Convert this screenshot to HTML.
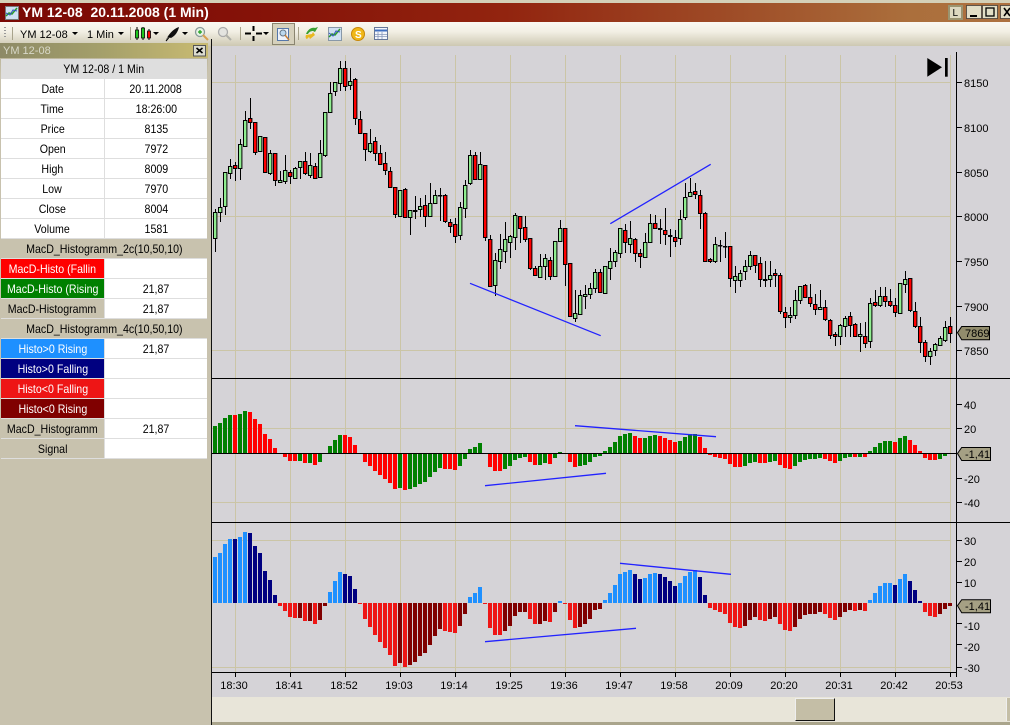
<!DOCTYPE html>
<html><head><meta charset="utf-8"><style>
html,body{margin:0;padding:0;width:1010px;height:725px;overflow:hidden;background:#c8c2ae;font-family:"Liberation Sans",sans-serif;font-size:11px;color:#000}
.a{position:absolute}
#grid{position:absolute;left:1px;top:59px;width:206px;display:grid;grid-template-columns:103px 102px;grid-auto-rows:19px;gap:1px;background:#dedede;padding-bottom:1px;font-size:12px}
#grid div{background:#fff;text-align:center;line-height:20px;height:19px;overflow:hidden;white-space:nowrap}
#grid i{display:inline-block;font-style:normal;transform:scaleX(.885)}
#grid .h{grid-column:1/3;background:#c8c2ae}
#grid .t{background:#c8c2ae}
#grid .w{color:#fff}
svg text{font-family:"Liberation Sans",sans-serif;font-size:11px;fill:#000}
</style></head><body>
<div class="a" style="left:0;top:0;width:1010px;height:3px;background:#d4d0b8"></div>
<div class="a" style="left:0;top:3px;width:1010px;height:19px;background:linear-gradient(90deg,#7a0905 0,#851208 25%,#92240f 50%,#a0512a 75%,#ab6f3c 90%,#ad7140 100%)"></div>
<div class="a" style="left:22px;top:4px;color:#fff;font-weight:bold;font-size:14px;line-height:17px;white-space:pre">YM 12-08  20.11.2008 (1 Min)</div>
<div class="a" style="left:0;top:22px;width:1010px;height:24px;background:linear-gradient(#faf8f2,#f2efe4 40%,#cdc8b2)"></div>
<div class="a" style="left:212px;top:46px;width:798px;height:651px;background:#d5d3d7"></div>
<div class="a" style="left:212px;top:697px;width:798px;height:26px;background:#e8e5d9"></div>
<div class="a" style="left:212px;top:722px;width:798px;height:3px;background:#aaa58c"></div>
<div class="a" style="left:795px;top:698px;width:40px;height:23px;background:#c4bea6;box-sizing:border-box;border:1px solid;border-color:#eee #111 #111 #eee"></div>
<div class="a" style="left:1006px;top:698px;width:4px;height:23px;background:#c4bea6;border-left:1px solid #eee;box-sizing:border-box"></div>
<div class="a" style="left:0;top:43px;width:208px;height:15px;background:linear-gradient(90deg,#8d8a66,#a5a06a 50%,#c9bb72)"></div>
<div class="a" style="left:3px;top:44px;color:#d8d8c8;line-height:14px">YM 12-08</div>
<div class="a" style="left:0;top:58px;width:208px;height:21px;background:linear-gradient(#bdb79d,#cbc5b0)"></div>
<div id="grid">
<div class="h" style="background:transparent"><i>YM 12-08 / 1 Min</i></div>
<div><i>Date</i></div><div><i>20.11.2008</i></div>
<div><i>Time</i></div><div><i>18:26:00</i></div>
<div><i>Price</i></div><div><i>8135</i></div>
<div><i>Open</i></div><div><i>7972</i></div>
<div><i>High</i></div><div><i>8009</i></div>
<div><i>Low</i></div><div><i>7970</i></div>
<div><i>Close</i></div><div><i>8004</i></div>
<div><i>Volume</i></div><div><i>1581</i></div>
<div class="h"><i>MacD_Histogramm_2c(10,50,10)</i></div>
<div class="w" style="background:#f00"><i>MacD-Histo (Fallin</i></div><div></div>
<div class="w" style="background:#008000"><i>MacD-Histo (Rising</i></div><div><i>21,87</i></div>
<div class="t"><i>MacD-Histogramm</i></div><div><i>21,87</i></div>
<div class="h"><i>MacD_Histogramm_4c(10,50,10)</i></div>
<div class="w" style="background:#1e90ff"><i>Histo&gt;0 Rising</i></div><div><i>21,87</i></div>
<div class="w" style="background:#000080"><i>Histo&gt;0 Falling</i></div><div></div>
<div class="w" style="background:#ee1515"><i>Histo&lt;0 Falling</i></div><div></div>
<div class="w" style="background:#800000"><i>Histo&lt;0 Rising</i></div><div></div>
<div class="t"><i>MacD_Histogramm</i></div><div><i>21,87</i></div>
<div class="t"><i>Signal</i></div><div></div>
</div>
<svg class="a" style="left:0;top:0" width="1010" height="725" viewBox="0 0 1010 725">
<!-- title icon -->
<rect x="5.5" y="6.5" width="13" height="13" fill="#cfe0f2" stroke="#777"/>
<path d="M6 16l3-3 3 1 5-6" fill="none" stroke="#2a9a2a" stroke-width="1.5"/><path d="M6 13l4 2 3-5 4 1" fill="none" stroke="#3355bb"/>
<!-- panel close -->
<rect x="193.5" y="45.5" width="12" height="10.5" fill="#dcdcd0" stroke="#555"/>
<path d="M196.5 48l6 5M202.5 48l-6 5" stroke="#000" stroke-width="1.6"/>
<!-- dark divider -->
<rect x="211" y="39" width="1" height="686" fill="#111"/>
<!-- toolbar -->
<path d="M5 27v1M5 30v1M5 33v1M5 36v1" stroke="#999" stroke-width="2"/>
<path d="M12.5 27V40M130.5 27V40M240.5 27V40M298.5 27V40" stroke="#a8a38c"/>
<text x="20" y="38">YM 12-08</text><text x="87" y="38">1 Min</text>
<path d="M72 32h6l-3 3zM118 32h6l-3 3zM153 32h6l-3 3zM182 32h6l-3 3zM263 32h6l-3 3z" fill="#000"/>
<path d="M137 27v13M143 27v13M149 29v11" stroke="#000"/>
<path d="M135.5 30h3v8h-3zM141.500 28h3v10h-3z" fill="#1ec81e" stroke="#000" stroke-width=".8"/><path d="M147.500 31h3v7h-3z" fill="#f00" stroke="#000" stroke-width=".8"/>
<path d="M166 40c2-5 7-11 13-13-1 5-4 9-8 11l-3-1z" fill="#111"/><path d="M166 41l5-6" stroke="#000"/>
<circle cx="200" cy="32" r="4.500" fill="#e8f2e4" stroke="#8a9a9a" stroke-width="1.300"/><path d="M203 35l5 5" stroke="#d8a050" stroke-width="2"/><path d="M198 32h4M200 30v4" stroke="#18a018" stroke-width="1.200"/>
<circle cx="223" cy="32" r="4.500" fill="#e4e4e0" stroke="#aaa" stroke-width="1.300"/><path d="M226 35l5 5" stroke="#b0b0a8" stroke-width="2"/>
<path d="M245 33.500h6M256 33.500h6M253.500 26v5M253.500 36v5" stroke="#000" stroke-width="2"/>
<rect x="272.500" y="23.500" width="22" height="21" fill="#d6d1bc" stroke="#8a8570"/>
<rect x="277.500" y="28.500" width="11" height="12" fill="#eef2fa" stroke="#5577aa"/><circle cx="283" cy="33" r="3" fill="#bcd8ee" stroke="#667788"/><path d="M285 35l4 5" stroke="#c8803a" stroke-width="1.500"/>
<path d="M306 34c2-5 6-7 9-6l3-1-3 5-2-1c-2 0-4 1-5 3z" fill="#3aa032"/><path d="M306 35l6-1 1-2 2 3-5 4-1-2-2 2c-1 0-2-2-1-4z" fill="#e8b820"/>
<rect x="328.500" y="27.500" width="13" height="13" fill="#cfe0f2" stroke="#8898a8"/><path d="M329 37l3-3 3 1 5-6" fill="none" stroke="#2a9a2a" stroke-width="1.500"/><path d="M329 33l4 3 3-5 4 1" fill="none" stroke="#3355bb"/>
<circle cx="358" cy="34" r="6.500" fill="#f0b818" stroke="#c88808"/><text x="355" y="38" style="font-size:10px;font-weight:bold;fill:#fff">S</text>
<rect x="374.500" y="27.500" width="13" height="12" fill="#f4f6fb" stroke="#667799"/><path d="M375 30.500h12" stroke="#3f6fc0" stroke-width="2"/><path d="M378 32v7M382 32v7M375 34.500h12M375 36.500h12" stroke="#8899bb" stroke-width=".8"/>
<!-- window buttons -->
<rect x="949" y="6" width="13" height="13" fill="#dcd8c0" stroke="#9a9470" stroke-width="2"/><text x="952.500" y="16" style="font-size:10px">L</text>
<rect x="966.500" y="5.500" width="15" height="13" fill="#e2dec6" stroke="#333" stroke-width=".7"/><path d="M970 16h7" stroke="#000" stroke-width="2"/>
<rect x="982.500" y="5.500" width="15" height="13" fill="#e2dec6" stroke="#333" stroke-width=".7"/><rect x="986" y="8" width="8" height="8" fill="none" stroke="#000" stroke-width="1.300"/>
<rect x="1000.500" y="5.500" width="12" height="13" fill="#e2dec6" stroke="#333" stroke-width=".7"/><path d="M1004 8l6 8M1010 8l-6 8" stroke="#000" stroke-width="1.600"/>
<!-- grid -->
<path d="M235.500 55V672M290.500 55V672M345.500 55V672M400.500 55V672M455.500 55V672M510.500 55V672M565.500 55V672M620.500 55V672M675.500 55V672M730.500 55V672M785.500 55V672M840.500 55V672M895.500 55V672M950.500 55V672M212 82.500H951M212 216.500H951M212 350.500H951M212 428.500H951M212 502.500H951M212 540.500H951M212 667.500H951" stroke="#cbc5a6" fill="none"/>
<!-- pane lines -->
<path d="M212 378.500H1010M212 522.500H1010M212 672.500H957M956.500 52V677" stroke="#000" fill="none"/>
<path d="M212 453.500H957" stroke="#000" fill="none" stroke-width="1"/>
<!-- candle wicks -->
<g transform="translate(.5 0)" stroke="#000" stroke-width="1">
<path fill="none" d="M215 209V252M220 198V222M225 172V215M230 159V179M235 162V181M240 139V180M245 111V147M250 98V129M255 122V155M260 136V151M265 137V173M270 150V175M275 153V186M280 171V183M285 155V184M290 170V184M295 167V179M300 161V179M305 152V175M310 153V178M315 163V179M320 140V178M325 112V157M330 82V112M335 82V96M340 61V91M345 61V91M350 68V90M355 78V125M360 111V133M365 133V161M370 129V153M375 137V161M380 145V165M385 152V175M390 167V187M395 187V218M400 190V216M405 188V218M410 210V235M415 196V219M420 198V217M425 195V227M430 183V217M435 190V204M440 188V221M445 194V223M450 219V233M455 218V243M460 202V240M465 180V218M470 150V185M475 152V180M480 152V180M485 165V241M490 235V286M495 253V296M500 234V269M505 222V263M510 235V258M515 213V250M520 216V243M525 216V242M530 238V270M535 266V276M540 254V278M545 254V280M550 257V280M555 241V277M560 220V242M565 228V286M570 263V317M575 290V322M580 290V315M585 285V309M590 283V299M595 269V293M600 269V293M605 266V294M610 248V280M615 250V267M620 228V258M625 224V253M630 221V253M635 238V262M640 249V268M645 233V258M650 214V243M655 215V229M660 219V244M665 208V245M670 229V257M675 230V247M680 210V245M685 183V220M690 178V197M695 183V199M700 190V229M705 212V262M710 258V263M715 237V263M720 240V262M725 232V258M730 246V287M735 266V293M740 270V287M745 260V280M750 251V270M755 255V273M760 257V287M765 261V287M770 261V287M775 269V287M780 273V314M785 307V328M790 307V323M795 290V319M800 286V304M805 284V298M810 284V307M815 294V315M820 290V310M825 300V321M830 319V339M835 332V346M840 324V345M845 316V337M850 312V337M855 323V337M860 323V352M865 322V348M870 298V348M875 290V307M880 287V307M885 287V307M890 289V307M895 298V317M900 283V314M905 271V293M910 278V312M915 302V328M920 317V353M925 340V362M930 348V365M935 343V356M940 336V346M945 321V342M950 317V343"/>
</g>
<!-- candle bodies -->
<g transform="translate(.2 .5)" stroke="#000" stroke-width="1">
<path fill="#90ee90" d="M213.300 212h3.400V238h-3.400zM218.300 207h3.400V212h-3.400zM223.300 172h3.400V206h-3.400zM228.300 166h3.400V173h-3.400zM238.300 144h3.400V168h-3.400zM243.300 120h3.400V146h-3.400zM258.300 136h3.400V151h-3.400zM268.300 153h3.400V173h-3.400zM278.300 180h3.400V182h-3.400zM283.300 170h3.400V181h-3.400zM293.300 168h3.400V178h-3.400zM298.300 161h3.400V167h-3.400zM308.300 165h3.400V175h-3.400zM318.300 153h3.400V177h-3.400zM323.300 112h3.400V155h-3.400zM328.300 93h3.400V112h-3.400zM333.300 82h3.400V91h-3.400zM338.300 68h3.400V83h-3.400zM348.300 81h3.400V85h-3.400zM368.300 143h3.400V151h-3.400zM398.300 190h3.400V216h-3.400zM408.300 210h3.400V217h-3.400zM413.300 210h3.400V211h-3.400zM418.300 206h3.400V209h-3.400zM428.300 203h3.400V216h-3.400zM433.300 195h3.400V203h-3.400zM438.300 195h3.400V195.500h-3.400zM458.300 207h3.400V235h-3.400zM463.300 185h3.400V208h-3.400zM468.300 155h3.400V183h-3.400zM478.300 164h3.400V179h-3.400zM493.300 260h3.400V285h-3.400zM498.300 249h3.400V261h-3.400zM503.300 239h3.400V251h-3.400zM508.300 236h3.400V242h-3.400zM513.300 215h3.400V237h-3.400zM538.300 266h3.400V277h-3.400zM543.300 258h3.400V266h-3.400zM553.300 241h3.400V276h-3.400zM558.300 228h3.400V241h-3.400zM573.300 313h3.400V318h-3.400zM578.300 295h3.400V314h-3.400zM583.300 294h3.400V296h-3.400zM588.300 288h3.400V294h-3.400zM593.300 272h3.400V288h-3.400zM603.300 266h3.400V293h-3.400zM608.300 261h3.400V268h-3.400zM613.300 252h3.400V261h-3.400zM618.300 228h3.400V253h-3.400zM628.300 238h3.400V244h-3.400zM643.300 242h3.400V257h-3.400zM648.300 223h3.400V242h-3.400zM658.300 228h3.400V229h-3.400zM668.300 235h3.400V236h-3.400zM678.300 219h3.400V238h-3.400zM683.300 197h3.400V217h-3.400zM688.300 192h3.400V196h-3.400zM713.300 244h3.400V261h-3.400zM718.300 245h3.400V245.500h-3.400zM723.300 246h3.400V246.500h-3.400zM733.300 276h3.400V280h-3.400zM738.300 273h3.400V280h-3.400zM743.300 266h3.400V271h-3.400zM748.300 255h3.400V266h-3.400zM763.300 279h3.400V280h-3.400zM768.300 275h3.400V279h-3.400zM788.300 315h3.400V317h-3.400zM793.300 300h3.400V315h-3.400zM798.300 286h3.400V300h-3.400zM818.300 307h3.400V309h-3.400zM838.300 325h3.400V336h-3.400zM843.300 318h3.400V326h-3.400zM858.300 334h3.400V336h-3.400zM868.300 303h3.400V341h-3.400zM878.300 296h3.400V305h-3.400zM898.300 283h3.400V313h-3.400zM903.300 279h3.400V284h-3.400zM928.300 351h3.400V356h-3.400zM933.300 344h3.400V350h-3.400zM938.300 338h3.400V345h-3.400zM943.300 327h3.400V340h-3.400z"/>
<path fill="#f00" d="M233.300 165h3.400V168h-3.400zM248.300 118h3.400V122h-3.400zM253.300 122h3.400V152h-3.400zM263.300 137h3.400V172h-3.400zM273.300 153h3.400V180h-3.400zM288.300 172h3.400V176h-3.400zM303.300 161h3.400V173h-3.400zM313.300 166h3.400V178h-3.400zM343.300 68h3.400V86h-3.400zM353.300 79h3.400V118h-3.400zM358.300 119h3.400V133h-3.400zM363.300 133h3.400V149h-3.400zM373.300 141h3.400V153h-3.400zM378.300 153h3.400V164h-3.400zM383.300 163h3.400V170h-3.400zM388.300 171h3.400V187h-3.400zM393.300 187h3.400V214h-3.400zM403.300 189h3.400V217h-3.400zM423.300 205h3.400V216h-3.400zM443.300 195h3.400V221h-3.400zM448.300 222h3.400V226h-3.400zM453.300 224h3.400V236h-3.400zM473.300 155h3.400V179h-3.400zM483.300 165h3.400V237h-3.400zM488.300 239h3.400V286h-3.400zM518.300 216h3.400V228h-3.400zM523.300 227h3.400V239h-3.400zM528.300 238h3.400V268h-3.400zM533.300 268h3.400V275h-3.400zM548.300 260h3.400V276h-3.400zM563.300 228h3.400V264h-3.400zM568.300 263h3.400V316h-3.400zM598.300 272h3.400V292h-3.400zM623.300 230h3.400V242h-3.400zM633.300 239h3.400V253h-3.400zM638.300 253h3.400V256h-3.400zM653.300 223h3.400V228h-3.400zM663.300 230h3.400V234h-3.400zM673.300 237h3.400V241h-3.400zM693.300 191h3.400V194h-3.400zM698.300 195h3.400V213h-3.400zM703.300 213h3.400V261h-3.400zM708.300 259h3.400V261h-3.400zM728.300 246h3.400V278h-3.400zM753.300 255h3.400V265h-3.400zM758.300 263h3.400V279h-3.400zM773.300 273h3.400V275h-3.400zM778.300 275h3.400V311h-3.400zM783.300 312h3.400V317h-3.400zM803.300 285h3.400V297h-3.400zM808.300 297h3.400V303h-3.400zM813.300 304h3.400V309h-3.400zM823.300 307h3.400V319h-3.400zM828.300 320h3.400V335h-3.400zM833.300 334h3.400V336h-3.400zM848.300 316h3.400V325h-3.400zM853.300 324h3.400V336h-3.400zM863.300 336h3.400V343h-3.400zM873.300 302h3.400V305h-3.400zM883.300 296h3.400V301h-3.400zM888.300 301h3.400V305h-3.400zM893.300 305h3.400V312h-3.400zM908.300 278h3.400V310h-3.400zM913.300 311h3.400V326h-3.400zM918.300 326h3.400V342h-3.400zM923.300 342h3.400V356h-3.400zM948.300 326h3.400V333h-3.400z"/>
</g>
<!-- hist 1 -->
<g transform="translate(0 375) scale(1 .33333)" stroke-width="4" fill="none">
<path stroke="#008000" d="M215 153V235M220 144V235M225 129V235M230 120V235M240 117V235M245 108V235M300 258V235M310 264V235M320 261V235M330 213V235M335 195V235M340 180V235M400 339V235M410 342V235M415 336V235M420 327V235M425 321V235M430 306V235M435 291V235M440 279V235M460 273V235M465 252V235M470 222V235M475 216V235M480 204V235M505 282V235M510 273V235M515 255V235M520 249V235M525 246V235M540 270V235M545 264V235M555 249V235M560 231V235M580 273V235M585 270V235M590 261V235M595 246V235M600 243V235M605 228V235M610 216V235M615 201V235M620 183V235M625 177V235M630 174V235M645 189V235M650 183V235M655 180V235M680 198V235M685 186V235M690 177V235M695 177V235M745 273V235M750 264V235M755 261V235M770 261V235M775 258V235M795 273V235M800 261V235M805 255V235M810 252V235M815 252V235M820 249V235M840 258V235M845 249V235M850 246V235M860 246V235M870 228V235M875 216V235M880 204V235M885 198V235M890 198V235M900 189V235M905 183V235M940 252V235M945 243V235"/>
<path stroke="#f00" d="M235 120V235M250 111V235M255 132V235M260 147V235M265 177V235M270 192V235M275 219V235M285 246V235M290 258V235M295 258V235M305 264V235M315 270V235M345 180V235M350 186V235M355 210V235M365 261V235M370 273V235M375 288V235M380 300V235M385 312V235M390 324V235M395 342V235M405 345V235M445 282V235M450 282V235M455 285V235M490 276V235M495 288V235M500 288V235M530 261V235M535 270V235M550 267V235M570 261V235M575 276V235M635 183V235M640 189V235M660 183V235M665 189V235M670 195V235M675 201V235M700 186V235M705 219V235M710 240V235M715 246V235M720 249V235M725 252V235M730 267V235M735 276V235M740 276V235M760 264V235M765 264V235M780 270V235M785 279V235M790 282V235M825 252V235M830 258V235M835 264V235M855 246V235M865 246V235M895 201V235M910 195V235M915 210V235M920 228V235M925 249V235M930 255V235M935 255V235"/>
</g>
<path d="M212 453.500H957" stroke="#000" fill="none"/>
<!-- hist 2 -->
<g transform="translate(0 520) scale(1 .33333)" stroke-width="4" fill="none">
<path stroke="#1e90ff" d="M215 111V249M220 99V249M225 72V249M230 57V249M240 51V249M245 36V249M330 216V249M335 183V249M340 156V249M470 231V249M475 219V249M480 201V249M560 243V249M605 240V249M610 219V249M615 195V249M620 162V249M625 156V249M630 150V249M645 174V249M650 162V249M655 159V249M680 189V249M685 168V249M690 156V249M695 150V249M870 240V249M875 219V249M880 198V249M885 189V249M890 189V249M900 177V249M905 162V249"/>
<path stroke="#000080" d="M235 57V249M250 39V249M255 78V249M260 99V249M265 153V249M270 180V249M275 225V249M345 162V249M350 168V249M355 207V249M635 162V249M640 177V249M660 162V249M665 171V249M670 183V249M675 198V249M700 171V249M705 225V249M895 195V249M910 183V249M915 210V249M920 243V249"/>
<path stroke="#ee1515" d="M280 258V249M285 273V249M290 291V249M295 294V249M305 303V249M315 312V249M360 252V249M365 297V249M370 321V249M375 345V249M380 366V249M385 384V249M390 405V249M395 438V249M405 441V249M445 333V249M450 336V249M455 339V249M485 252V249M490 324V249M495 345V249M500 345V249M530 297V249M535 312V249M550 306V249M565 252V249M570 300V249M575 324V249M710 264V249M715 270V249M720 276V249M725 282V249M730 309V249M735 321V249M740 324V249M760 300V249M765 303V249M780 312V249M785 330V249M790 333V249M825 282V249M830 294V249M835 300V249M855 273V249M865 273V249M925 276V249M930 288V249M935 291V249"/>
<path stroke="#800000" d="M300 294V249M310 303V249M320 300V249M325 258V249M400 429V249M410 435V249M415 426V249M420 408V249M425 399V249M430 375V249M435 348V249M440 327V249M460 318V249M465 282V249M505 333V249M510 318V249M515 288V249M520 276V249M525 276V249M540 312V249M545 303V249M555 276V249M580 321V249M585 312V249M590 297V249M595 270V249M600 267V249M745 318V249M750 300V249M755 291V249M770 297V249M775 291V249M795 321V249M800 297V249M805 285V249M810 282V249M815 282V249M820 276V249M840 291V249M845 276V249M850 270V249M860 270V249M940 282V249M945 267V249M950 258V249"/>
</g>
<!-- trendlines -->
<path d="M470 283.300L600.700 335.700M610.300 223.700L710.700 164.300M575 425.700L716 436.700M485 485.700L606 473.300M620 563.300L731 574.300M485 641.700L636 628.300" stroke="#2222ff" stroke-width="1.300" fill="none"/>
<!-- ticks -->
<path d="M957 82.500h5M957 127.500h5M957 172.500h5M957 216.500h5M957 261.500h5M957 306.500h5M957 350.500h5M957 404.500h5M957 428.500h5M957 478.500h5M957 502.500h5M957 540.500h5M957 561.500h5M957 582.500h5M957 623.500h5M957 644.500h5M957 667.500h5M235.500 672v5M290.500 672v5M345.500 672v5M400.500 672v5M455.500 672v5M510.500 672v5M565.500 672v5M620.500 672v5M675.500 672v5M730.500 672v5M785.500 672v5M840.500 672v5M895.500 672v5M950.500 672v5" stroke="#000" fill="none"/>
<g>
<text x="964" y="87">8150</text><text x="964" y="132">8100</text><text x="964" y="177">8050</text><text x="964" y="221">8000</text><text x="964" y="266">7950</text><text x="964" y="311">7900</text><text x="964" y="355">7850</text>
<text x="964" y="409">40</text><text x="964" y="433">20</text><text x="964" y="483">-20</text><text x="964" y="507">-40</text>
<text x="964" y="545">30</text><text x="964" y="566">20</text><text x="964" y="587">10</text><text x="964" y="630">-10</text><text x="964" y="651">-20</text><text x="964" y="672">-30</text>
</g>
<g text-anchor="middle">
<text x="234" y="689">18:30</text><text x="289" y="689">18:41</text><text x="344" y="689">18:52</text><text x="399" y="689">19:03</text><text x="454" y="689">19:14</text><text x="509" y="689">19:25</text><text x="564" y="689">19:36</text><text x="619" y="689">19:47</text><text x="674" y="689">19:58</text><text x="729" y="689">20:09</text><text x="784" y="689">20:20</text><text x="839" y="689">20:31</text><text x="894" y="689">20:42</text><text x="949" y="689">20:53</text>
</g>
<!-- tags -->
<path d="M957.500 332.700L961.700 326.500H989.500V339.700H961.700z" fill="#918c6c" stroke="#000"/><text x="965" y="337">7869</text>
<path d="M957.500 453.500L961.700 447.500H990.500V460.500H961.700z" fill="#a5a084" stroke="#000"/><text x="965" y="458">-1,41</text>
<path d="M957.500 605.700L961.700 599.700H990.500V612.700H961.700z" fill="#a5a084" stroke="#000"/><text x="965" y="610">-1,41</text>
<!-- end icon -->
<path d="M927.300 58L942 67.300 927.300 76.700z" fill="#000"/><rect x="945" y="58" width="2.700" height="18.700" fill="#000"/>
</svg>
</body></html>
